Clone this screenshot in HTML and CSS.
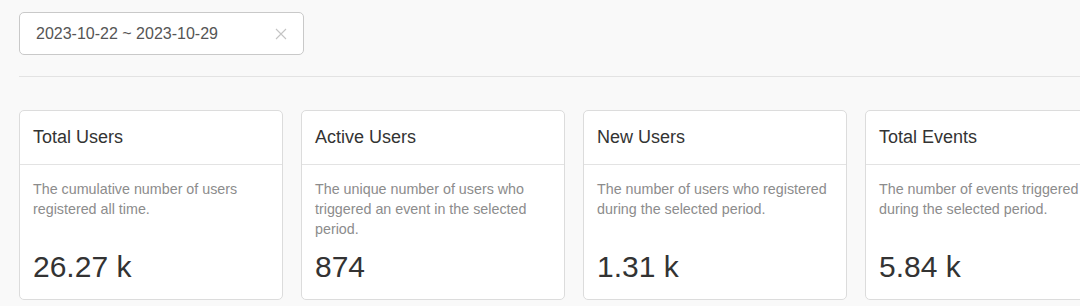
FILE: index.html
```html
<!DOCTYPE html>
<html lang="en">
<head>
<meta charset="utf-8">
<title>Dashboard</title>
<link rel="stylesheet" href="styles.css">
</head>
<body>
<div class="page">
  <div class="toolbar">
    <div class="date-range">
      <span class="date-text">2023-10-22 ~ 2023-10-29</span>
      <svg class="clear-icon" width="12" height="12" viewBox="0 0 12 12" aria-hidden="true">
        <path d="M1 1 L11 11 M11 1 L1 11" stroke="#c4c4c4" stroke-width="1.1" fill="none"/>
      </svg>
    </div>
  </div>
  <div class="divider"></div>
  <div class="cards">
    <div class="card">
      <div class="card-header">Total Users</div>
      <div class="card-body">
        <p class="card-desc">The cumulative number of users registered all time.</p>
        <div class="card-value">26.27 k</div>
      </div>
    </div>
    <div class="card">
      <div class="card-header">Active Users</div>
      <div class="card-body">
        <p class="card-desc">The unique number of users who triggered an event in the selected period.</p>
        <div class="card-value">874</div>
      </div>
    </div>
    <div class="card">
      <div class="card-header">New Users</div>
      <div class="card-body">
        <p class="card-desc">The number of users who registered during the selected period.</p>
        <div class="card-value">1.31 k</div>
      </div>
    </div>
    <div class="card">
      <div class="card-header">Total Events</div>
      <div class="card-body">
        <p class="card-desc">The number of events triggered during the selected period.</p>
        <div class="card-value">5.84 k</div>
      </div>
    </div>
  </div>
</div>
</body>
</html>
```

FILE: styles.css
```css
html, body {
  margin: 0;
  padding: 0;
  background: #f9f9f9;
  overflow: hidden;
}

body {
  font-family: "Liberation Sans", Arial, Helvetica, sans-serif;
  color: #333;
}

.page {
  padding: 12px 0 0 19px;
  width: 1061px;
  overflow: hidden;
}

.toolbar {
  display: flex;
}

.date-range {
  width: 285px;
  height: 43px;
  box-sizing: border-box;
  border: 1px solid #c9c9c9;
  border-radius: 5px;
  background: #fff;
  display: flex;
  align-items: center;
  justify-content: space-between;
  padding: 0 16px 0 16px;
}

.date-text {
  font-size: 16px;
  color: #555;
}

.clear-icon {
  display: block;
}

.divider {
  height: 1px;
  background: #e3e3e3;
  margin-top: 21px;
}

.cards {
  display: grid;
  grid-template-columns: repeat(4, 264px);
  gap: 18px;
  margin-top: 33px;
}

.card {
  background: #fff;
  border: 1px solid #dcdcdc;
  border-radius: 5px;
  height: 190px;
  box-sizing: border-box;
}

.card-header {
  height: 54px;
  box-sizing: border-box;
  border-bottom: 1px solid #e3e3e3;
  display: flex;
  align-items: center;
  padding: 0 13px;
  font-size: 18px;
  color: #333;
}

.card-body {
  padding: 14px 13px 0;
}

.card-desc {
  margin: 0;
  min-height: 60px;
  font-size: 14.3px;
  line-height: 20px;
  color: #8c8c8c;
}

.card-value {
  margin-top: 10px;
  font-size: 30px;
  line-height: 36px;
  color: #333;
}
```
